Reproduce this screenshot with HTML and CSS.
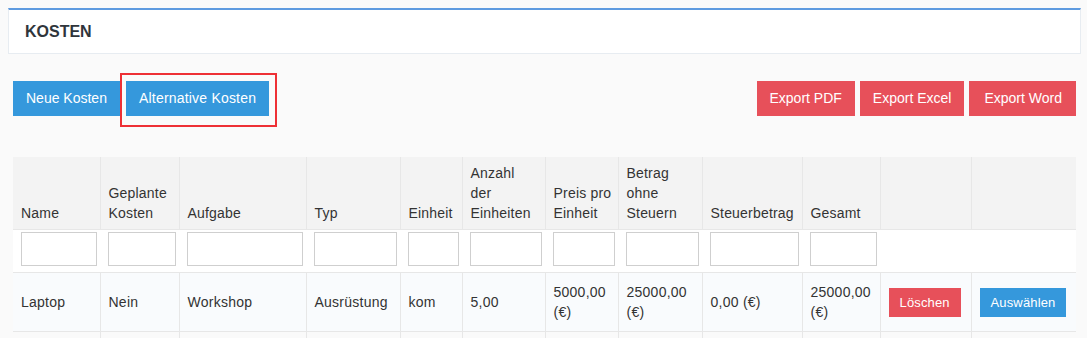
FILE: index.html
```html
<!DOCTYPE html>
<html lang="de">
<head>
    <meta charset="UTF-8">
    <title>Kosten</title>
    <link rel="stylesheet" href="styles.css">
</head>
<body>
    <div class="panel">
        <h2>KOSTEN</h2>
    </div>

    <div class="toolbar">
        <div class="btn-group">
            <button class="btn blue">Neue Kosten</button>
            <button class="btn blue marked">Alternative Kosten<span class="highlight"></span></button>
        </div>
        <div class="btn-group">
            <button class="btn red">Export PDF</button>
            <button class="btn red">Export Excel</button>
            <button class="btn red wide">Export Word</button>
        </div>
    </div>

    <table class="costs">
        <colgroup>
            <col style="width: 87px">
            <col style="width: 79px">
            <col style="width: 127px">
            <col style="width: 94px">
            <col style="width: 62px">
            <col style="width: 83px">
            <col style="width: 73px">
            <col style="width: 84px">
            <col style="width: 100px">
            <col style="width: 78px">
            <col style="width: 91px">
            <col style="width: 105px">
        </colgroup>
        <thead>
            <tr class="head">
                <th>Name</th>
                <th>Geplante Kosten</th>
                <th>Aufgabe</th>
                <th>Typ</th>
                <th>Einheit</th>
                <th class="tight">Anzahl der Einheiten</th>
                <th>Preis pro Einheit</th>
                <th>Betrag ohne Steuern</th>
                <th>Steuerbetrag</th>
                <th>Gesamt</th>
                <th></th>
                <th></th>
            </tr>
            <tr class="filter">
                <td><input type="text"></td>
                <td><input type="text"></td>
                <td><input type="text"></td>
                <td><input type="text"></td>
                <td><input type="text"></td>
                <td><input type="text"></td>
                <td><input type="text"></td>
                <td><input type="text"></td>
                <td><input type="text"></td>
                <td><input type="text"></td>
                <td></td>
                <td></td>
            </tr>
        </thead>
        <tbody>
            <tr>
                <td>Laptop</td>
                <td>Nein</td>
                <td>Workshop</td>
                <td>Ausrüstung</td>
                <td>kom</td>
                <td>5,00</td>
                <td>5000,00 (€)</td>
                <td>25000,00 (€)</td>
                <td>0,00 (€)</td>
                <td>25000,00 (€)</td>
                <td><button class="btn-sm red">Löschen</button></td>
                <td><button class="btn-sm blue">Auswählen</button></td>
            </tr>
            <tr class="empty">
                <td></td>
                <td></td>
                <td></td>
                <td></td>
                <td></td>
                <td></td>
                <td></td>
                <td></td>
                <td></td>
                <td></td>
                <td></td>
                <td></td>
            </tr>
        </tbody>
    </table>
</body>
</html>
```

FILE: styles.css
```css
body {
    font-family: "Liberation Sans", Arial, sans-serif;
    background-color: #fafafa;
    color: #333;
    margin: 0;
    padding: 8px 6px 0 8px;
}

.panel {
    background-color: #fff;
    border: 1px solid #e7ecf1;
    border-top: 2px solid #5e9be0;
    height: 43px;
    display: flex;
    align-items: center;
    padding: 0 16px;
}

.panel h2 {
    margin: 0;
    font-size: 16px;
    font-weight: bold;
    color: #2f353b;
}

.toolbar {
    display: flex;
    justify-content: space-between;
    padding: 0 5px;
    margin-top: 27px;
}

.btn-group {
    display: flex;
    gap: 5px;
}

.btn {
    font-family: inherit;
    font-size: 14px;
    line-height: 21px;
    padding: 7px 13px;
    border: none;
    color: #fff;
    cursor: pointer;
}

.btn.blue + .btn.blue {
    margin-left: 1px;
}

.btn.wide {
    padding: 7px 14px 7px 15px;
}

.blue {
    background-color: #3598dc;
}

.red {
    background-color: #e7505a;
}

.marked {
    position: relative;
    letter-spacing: 0.2px;
}

.highlight {
    position: absolute;
    left: -6px;
    right: -8px;
    top: -8px;
    bottom: -11px;
    border: 2px solid #ee3035;
}

.costs {
    margin: 41px 0 0 5px;
    border-collapse: collapse;
    table-layout: fixed;
    width: 1063px;
    font-size: 14px;
}

.costs th {
    font-weight: normal;
    text-align: left;
    vertical-align: bottom;
    line-height: 20px;
    padding: 6px 4px 6px 8px;
    background-color: #f3f3f3;
    border-left: 1px solid #e7e7e7;
    border-bottom: 1px solid #e7e7e7;
    letter-spacing: 0.2px;
}

.costs th.tight {
    padding-right: 10px;
}

.costs th:first-child,
.costs td:first-child {
    border-left: none;
}

.filter td {
    background-color: #fff;
    padding: 2px 3px 6px 8px;
    border-bottom: 1px solid #e7e7e7;
}

.filter input {
    display: block;
    width: 100%;
    height: 34px;
    box-sizing: border-box;
    border: 1px solid #cfcfcf;
    background: #fff;
}

.costs tbody td {
    background-color: #f9fbfd;
    line-height: 20px;
    padding: 9px 6px 9px 8px;
    border-left: 1px solid #e7e7e7;
    border-bottom: 1px solid #e7e7e7;
    vertical-align: middle;
    letter-spacing: 0.25px;
}

.costs .empty td {
    background-color: #fafafa;
    height: 20px;
}

.btn-sm {
    font-family: inherit;
    font-size: 13px;
    letter-spacing: 0.15px;
    line-height: 17px;
    padding: 6px 11px;
    border: none;
    color: #fff;
    cursor: pointer;
}
```
